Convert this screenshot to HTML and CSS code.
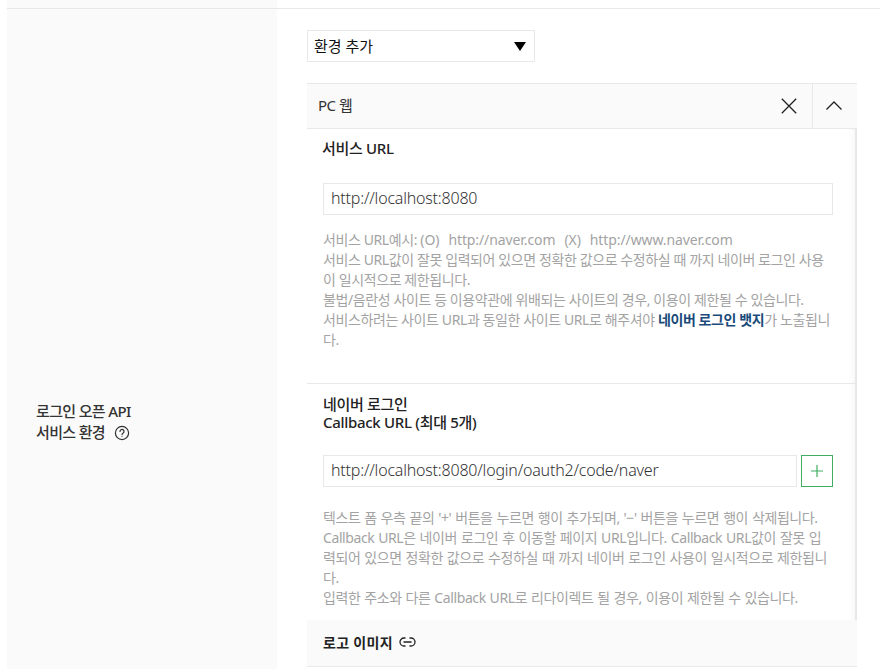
FILE: index.html
```html
<!DOCTYPE html>
<html lang="ko">
<head>
<meta charset="utf-8">
<title>로그인 오픈 API 서비스 환경</title>
<link rel="stylesheet" href="styles.css">
</head>
<body>
<div class="row">
  <div class="label-col">
    <div class="label">로그인 오픈 API<br>서비스 환경
      <svg class="help" width="16" height="16" viewBox="0 0 16 16" fill="none" stroke="#333" stroke-width="1.2"><circle cx="8" cy="8" r="6.6"/><path d="M6 6.4a2 2 0 1 1 3.2 1.6c-.8.5-1.2.9-1.2 1.7" stroke-linecap="round"/><circle cx="8" cy="11.6" r=".5" fill="#333" stroke="none"/></svg>
    </div>
  </div>
  <div class="content">
    <div class="select"><span>환경 추가</span><span class="arrow"></span></div>
    <div class="env-head">
      <span class="env-title">PC 웹</span>
      <button class="icon-btn close" aria-label="닫기">
        <svg width="16" height="16" viewBox="0 0 16 16" fill="none" stroke="#222" stroke-width="1.3"><path d="M.8.8l14.4 14.4M15.2.8L.8 15.2"/></svg>
      </button>
      <button class="icon-btn toggle" aria-label="접기">
        <svg width="16" height="9" viewBox="0 0 16 9" fill="none" stroke="#222" stroke-width="1.3"><path d="M.5 8.5l7.5-7.5 7.5 7.5"/></svg>
      </button>
    </div>
    <div class="env-body">
      <section class="sec sec-first">
        <h3 class="sec-title">서비스 URL</h3>
        <div class="field">http://localhost:8080</div>
        <p class="help-text">서비스 URL예시: <span class="eg">(O) http://naver.com (X) http://www.naver.com</span><br>서비스 URL값이 잘못 입력되어 있으면 정확한 값으로 수정하실 때 까지 네이버 로그인 사용이 일시적으로 제한됩니다.<br>불법/음란성 사이트 등 이용약관에 위배되는 사이트의 경우, 이용이 제한될 수 있습니다.<br>서비스하려는 사이트 URL과 동일한 사이트 URL로 해주셔야 <b class="badge-link">네이버 로그인 뱃지</b>가 노출됩니다.</p>
      </section>
      <section class="sec sec-second">
        <h3 class="sec-title">네이버 로그인<br>Callback URL (최대 5개)</h3>
        <div class="field-row">
          <div class="field grow">http://localhost:8080/login/oauth2/code/naver</div>
          <button class="add" aria-label="추가">
            <svg width="12" height="12" viewBox="0 0 12 12" stroke="#3fae62" stroke-width="1.2"><path d="M6 0v12M0 6h12"/></svg>
          </button>
        </div>
        <p class="help-text">텍스트 폼 우측 끝의 '+' 버튼을 누르면 행이 추가되며, '−' 버튼을 누르면 행이 삭제됩니다.<br>Callback URL은 네이버 로그인 후 이동할 페이지 URL입니다. Callback URL값이 잘못 입력되어 있으면 정확한 값으로 수정하실 때 까지 네이버 로그인 사용이 일시적으로 제한됩니다.<br>입력한 주소와 다른 Callback URL로 리다이렉트 될 경우, 이용이 제한될 수 있습니다.</p>
      </section>
    </div>
    <div class="logo-row">
      <span>로고 이미지</span>
      <svg width="17" height="10" viewBox="0 0 17 10" fill="none" stroke="#222" stroke-width="1.3"><path d="M6.5 1H5a4 4 0 0 0 0 8h1.5M10.5 1H12a4 4 0 0 1 0 8h-1.5M4.5 5h8"/></svg>
    </div>
  </div>
</div>
</body>
</html>
```
FILE: styles.css
```css
* { box-sizing: border-box; }
html, body { margin: 0; padding: 0; height: 669px; overflow: hidden; background: #fff; }
body {
  padding-left: 7px;
  font-family: "Noto Sans", "Noto Sans CJK KR", sans-serif;
  color: #222;
  font-size: 14px;
}
.row {
  display: flex;
  margin-top: 8px;
  border-top: 1px solid #e8e8e8;
  height: 661px;
}
.label-col {
  width: 270px;
  flex: none;
  background: #fafafa;
  padding: 392px 0 0 29px;
  position: relative;
}
.label-col::before {
  content: "";
  position: absolute;
  left: 0;
  right: 0;
  top: -9px;
  height: 8px;
  background: #fafafa;
}
.label { font-size: 15px; font-weight: 500; line-height: 21px; letter-spacing: -0.65px; color: #333; }
.help { vertical-align: -3px; margin-left: 6px; }
.content { padding: 21px 0 0 30px; width: 580px; flex: none; }
.select {
  width: 228px;
  height: 32px;
  border: 1px solid #e8e8e8;
  display: flex;
  align-items: center;
  justify-content: space-between;
  padding: 0 8px 2px 6px;
  font-size: 15px;
  color: #111;
}
.arrow { width: 0; height: 0; border-left: 6.5px solid transparent; border-right: 6.5px solid transparent; border-top: 9px solid #000; margin-top: 2px; }
.env-head {
  margin-top: 21px;
  height: 46px;
  width: 550px;
  display: flex;
  align-items: stretch;
  background: #fafafa;
  border-top: 1px solid #e8e8e8;
  border-bottom: 1px solid #e8e8e8;
}
.env-title { flex: 1; padding-left: 11px; line-height: 42px; font-size: 15px; font-weight: 400; letter-spacing: -0.5px; color: #333; }
.icon-btn { border: 0; background: none; padding: 0; display: flex; align-items: center; justify-content: center; }
.close { width: 45px; padding-right: 1px; }
.toggle { width: 45px; border-left: 1px solid #e8e8e8; padding-right: 2px; padding-bottom: 2px; }
.env-body {
  width: 550px;
  height: 491px;
  border-right: 2px solid #e8e8e8;
  box-shadow: inset -8px 0 8px -8px #f0f0f0;
}
.sec { padding: 0 22px 0 16px; }
.sec-first { height: 255px; padding-top: 10px; border-bottom: 1px solid #e8e8e8; margin-right: -2px; padding-right: 24px; }
.sec-second { padding-top: 11px; }
.sec-title { margin: 0; font-size: 15px; font-weight: 500; line-height: 19px; letter-spacing: -0.3px; color: #222; }
.sec-second .sec-title { line-height: 18px; }
.sec-first .sec-title { margin-left: -1px; }
.field {
  height: 32px;
  border: 1px solid #e8e8e8;
  padding: 0 7px;
  line-height: 28px;
  font-size: 16px;
  letter-spacing: -0.2px;
  color: #333;
  background: #fff;
  font-weight: 300;
}
.sec-first .field { margin-top: 25px; }
.field-row { display: flex; gap: 4px; margin-top: 24px; }
.grow { flex: 1; }
.add { width: 32px; height: 32px; border: 1px solid #3fae62; background: #fff; padding: 0; display: flex; align-items: center; justify-content: center; }
.help-text { margin: 15px 0 0; font-size: 14px; line-height: 20px; letter-spacing: -0.4px; color: #a3a3a3; word-break: break-all; }
.eg { word-spacing: 5.5px; letter-spacing: -0.1px; }
.sec-second .help-text { margin-top: 21px; word-spacing: 0.6px; }
.badge-link { color: #1a4a7a; font-weight: 700; }
.logo-row {
  width: 550px;
  height: 47px;
  background: #fafafa;
  border-bottom: 1px solid #e8e8e8;
  padding: 0 0 2px 16px;
  display: flex;
  align-items: center;
  gap: 6px;
  font-size: 14px;
  font-weight: 700;
  letter-spacing: 0.3px;
  color: #222;
}
```
